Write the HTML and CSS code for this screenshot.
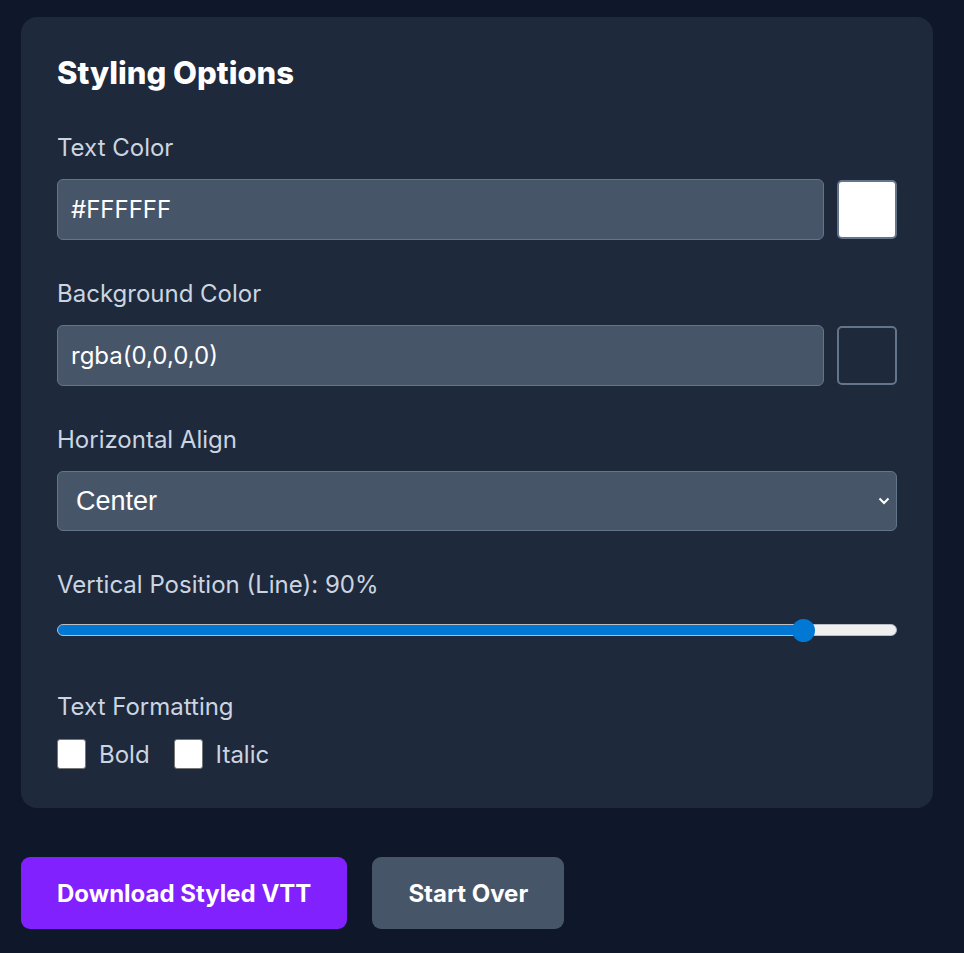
FILE: index.html
```html
<!DOCTYPE html>
<html>
  <head>
    <title>Styling Options</title>
    <link rel="stylesheet" href="styles.css">
  </head>
  <body>
    <section class="card">
      <h2>Styling Options</h2>

      <div class="field">
        <label for="textColor">Text Color</label>
        <div class="color-row">
          <input id="textColor" type="text" value="#FFFFFF">
          <span class="swatch swatch-white"></span>
        </div>
      </div>

      <div class="field">
        <label for="bgColor">Background Color</label>
        <div class="color-row">
          <input id="bgColor" type="text" value="rgba(0,0,0,0)">
          <span class="swatch"></span>
        </div>
      </div>

      <div class="field">
        <label for="align">Horizontal Align</label>
        <div class="select-wrap">
          <select id="align">
            <option>Left</option>
            <option selected>Center</option>
            <option>Right</option>
          </select>
          <svg class="chevron" width="12" height="8" viewBox="0 0 12 8">
            <path d="M1.5 1.5 L6 6 L10.5 1.5" fill="none" stroke="#fff" stroke-width="2"/>
          </svg>
        </div>
      </div>

      <div class="field">
        <label for="line">Vertical Position (Line): 90%</label>
        <input id="line" class="range" type="range" min="0" max="100" value="90" style="--fill: 88.9%">
      </div>

      <div class="field">
        <label>Text Formatting</label>
        <div class="checks">
          <label class="check"><input type="checkbox"> Bold</label>
          <label class="check"><input type="checkbox"> Italic</label>
        </div>
      </div>
    </section>

    <div class="actions">
      <button class="btn btn-primary">Download Styled VTT</button>
      <button class="btn btn-secondary">Start Over</button>
    </div>
  </body>
</html>
```

FILE: styles.css
```css
* { box-sizing: border-box; }
body {
  margin: 0;
  padding: 17px 31px 24px 21px;
  background: #0f172a;
  font-family: Inter, "Open Sans", sans-serif;
  color: #cbd5e1;
}

.card {
  display: flex;
  flex-direction: column;
  gap: 40px;
  background: #1e293b;
  border-radius: 16px;
  padding: 36px 36px 39px;
}
.card h2 {
  margin: 0 0 1px;
  font-size: 31px;
  line-height: 40px;
  font-weight: 800;
  color: #fff;
}

.field > label {
  display: block;
  font-size: 24px;
  line-height: 28px;
  margin-bottom: 17px;
}

.color-row {
  display: flex;
  align-items: center;
  gap: 13px;
}
.color-row input {
  flex: 1;
  height: 61px;
  padding: 0 13px;
  background: #475569;
  border: 1px solid #64748b;
  border-radius: 6px;
  color: #fff;
  font-family: inherit;
  font-size: 24px;
}
.swatch {
  width: 60px;
  height: 59px;
  border: 2px solid #64748b;
  border-radius: 5px;
}
.swatch-white { background: #fff; }

.select-wrap { position: relative; }
.select-wrap select {
  appearance: none;
  width: 100%;
  height: 60px;
  padding: 0 18px;
  background: #475569;
  border: 1px solid #64748b;
  border-radius: 6px;
  color: #fff;
  font-family: "Liberation Sans", Arial, sans-serif;
  font-size: 27px;
}
.chevron {
  position: absolute;
  right: 7px;
  top: 26px;
}

.range {
  -webkit-appearance: none;
  appearance: none;
  display: block;
  width: 100%;
  height: 24px;
  margin: 19px 0 11px;
  background: transparent;
}
.range::-webkit-slider-runnable-track {
  height: 12px;
  border-radius: 6px;
  border: 1px solid #b9bec6;
  background: linear-gradient(to right, #0078d4 var(--fill), #efefef var(--fill));
}
.range::-webkit-slider-thumb {
  -webkit-appearance: none;
  width: 23px;
  height: 23px;
  margin-top: -6.5px;
  border-radius: 50%;
  background: #0078d4;
  border: none;
}

.checks {
  display: flex;
  gap: 24px;
  margin-top: 18px;
}
.check {
  display: flex;
  align-items: center;
  gap: 13px;
  font-size: 24px;
  line-height: 29px;
}
.check input {
  appearance: none;
  margin: 0;
  width: 29px;
  height: 30px;
  background: #fff;
  border: 1px solid #767676;
  border-radius: 3px;
}

.actions {
  display: flex;
  gap: 25px;
  margin-top: 49px;
}
.btn {
  height: 72px;
  padding: 0 36px;
  border: none;
  border-radius: 9px;
  color: #fff;
  font-family: inherit;
  font-size: 24px;
  font-weight: 700;
}
.btn-primary { background: #8121fd; }
.btn-secondary { background: #475569; }
```
